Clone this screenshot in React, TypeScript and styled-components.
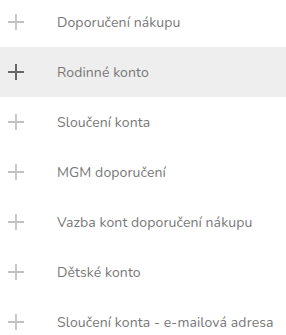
import React from "react";
import styled, { createGlobalStyle } from "styled-components";

const Global = createGlobalStyle`
  html, body { margin: 0; padding: 0; background: #ffffff; }
  body { font-family: "Nunito", "Lato", "Noto Sans", sans-serif; }
`;

const List = styled.ul`
  list-style: none;
  margin: -3px 0 0 0;
  padding: 0;
  width: 286px;
`;

const Row = styled.li<{ $active?: boolean }>`
  display: flex;
  align-items: center;
  height: 50px;
  padding-left: 8px;
  gap: 33px;
  background: ${(p) => (p.$active ? "#eeeeee" : "transparent")};
`;

const Label = styled.span`
  font-size: 14px;
  color: #777777;
  white-space: nowrap;
  letter-spacing: 0.1px;
`;

const PlusIcon = ({ active }: { active?: boolean }) => (
  <svg width="16" height="16" viewBox="0 0 16 16" style={{ flex: "none" }}>
    <path
      d="M8 0V16M0 8H16"
      stroke={active ? "#666666" : "#c2c2c2"}
      strokeWidth={active ? 2 : 1.8}
      fill="none"
    />
  </svg>
);

const items = [
  "Doporučení nákupu",
  "Rodinné konto",
  "Sloučení konta",
  "MGM doporučení",
  "Vazba kont doporučení nákupu",
  "Dětské konto",
  "Sloučení konta - e-mailová adresa",
];

export default function App() {
  return (
    <>
      <Global />
      <List>
        {items.map((t, i) => (
          <Row key={t} $active={i === 1}>
            <PlusIcon active={i === 1} />
            <Label>{t}</Label>
          </Row>
        ))}
      </List>
    </>
  );
}
